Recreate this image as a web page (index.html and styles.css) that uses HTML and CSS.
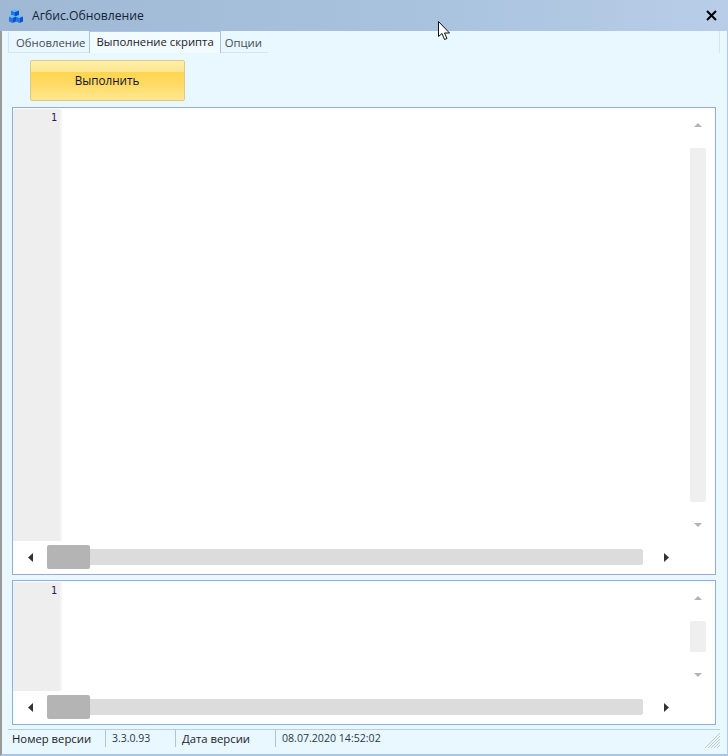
FILE: index.html
```html
<!DOCTYPE html>
<html lang="ru">
<head>
<meta charset="utf-8">
<title>Агбис.Обновление</title>
<link rel="stylesheet" href="styles.css">
</head>
<body>
<div class="window">
  <header class="titlebar">
    <svg class="app-icon" width="14" height="14" viewBox="0 0 14 14">
      <path d="M2 1.500L6 3v4.500L2 6z" fill="#1a78ea"/>
      <path d="M2 1.500L6 0l4 1.500L6 3z" fill="#6cbcfa"/>
      <path d="M6 3l4-1.500V6L6 7.500z" fill="#0b50cc"/>
      <path d="M0 7.500L3.500 9v5L0 12.500z" fill="#1a78ea"/>
      <path d="M0 7.500L3.500 6 7 7.500 3.500 9z" fill="#6cbcfa"/>
      <path d="M3.500 9L7 7.500v5L3.500 14z" fill="#0b50cc"/>
      <path d="M7 7.500L10.500 9v5L7 12.500z" fill="#1a78ea"/>
      <path d="M7 7.500L10.500 6 14 7.500 10.500 9z" fill="#6cbcfa"/>
      <path d="M10.500 9L14 7.500v5L10.500 14z" fill="#0b50cc"/>
    </svg>
    <span class="title-text">Агбис.Обновление</span>
    <svg class="close-icon" width="11" height="11" viewBox="0 0 11 11">
      <path d="M1 1l9 9M10 1l-9 9" stroke="#000" stroke-width="2" fill="none"/>
    </svg>
  </header>
  <div class="client">
    <nav class="tabs">
      <span class="tab tab-first">Обновление</span>
      <span class="tab tab-active">Выполнение скрипта</span>
      <span class="tab tab-last">Опции</span>
    </nav>
    <div class="toolbar"><button class="run-btn">Выполнить</button></div>
    <section class="editor editor-main">
      <div class="editor-body">
        <div class="gutter"><span class="line-no">1</span></div>
        <div class="code"></div>
        <div class="vscroll">
          <svg class="arrow" width="8" height="4" viewBox="0 0 8 4"><path d="M0 4l4-4 4 4z" fill="#b4b4b4"/></svg>
          <div class="vtrack"></div>
          <svg class="arrow" width="8" height="4" viewBox="0 0 8 4"><path d="M0 0l4 4 4-4z" fill="#b4b4b4"/></svg>
        </div>
      </div>
      <div class="hscroll">
        <svg class="arrow-h" width="5" height="9" viewBox="0 0 5 9"><path d="M5 0L0 4.500 5 9z" fill="#333"/></svg>
        <div class="htrack"><div class="hthumb"></div></div>
        <svg class="arrow-h" width="5" height="9" viewBox="0 0 5 9"><path d="M0 0l5 4.500L0 9z" fill="#333"/></svg>
      </div>
    </section>
    <section class="editor editor-log">
      <div class="editor-body">
        <div class="gutter"><span class="line-no">1</span></div>
        <div class="code"></div>
        <div class="vscroll">
          <svg class="arrow" width="8" height="4" viewBox="0 0 8 4"><path d="M0 4l4-4 4 4z" fill="#b4b4b4"/></svg>
          <div class="vtrack"></div>
          <svg class="arrow" width="8" height="4" viewBox="0 0 8 4"><path d="M0 0l4 4 4-4z" fill="#b4b4b4"/></svg>
        </div>
      </div>
      <div class="hscroll">
        <svg class="arrow-h" width="5" height="9" viewBox="0 0 5 9"><path d="M5 0L0 4.500 5 9z" fill="#333"/></svg>
        <div class="htrack"><div class="hthumb"></div></div>
        <svg class="arrow-h" width="5" height="9" viewBox="0 0 5 9"><path d="M0 0l5 4.500L0 9z" fill="#333"/></svg>
      </div>
    </section>
    <footer class="statusbar">
      <span class="cell cell-a">Номер версии</span>
      <span class="cell cell-b">3.3.0.93</span>
      <span class="cell cell-c">Дата версии</span>
      <span class="cell cell-d">08.07.2020 14:52:02</span>
      <svg class="grip" width="15" height="15" viewBox="0 0 15 15">
        <path d="M0 15L15 0M3 15L15 3M6 15l9-9M9 15l6-6M12 15l3-3" stroke="#bcc6ce" stroke-width="1" fill="none"/>
      </svg>
    </footer>
  </div>
</div>
<svg class="cursor" width="14" height="20" viewBox="0 0 14 20">
  <path d="M.5.500v15l3.500-3 2.500 6 2.500-1-2.500-5.500h5z" fill="#fff" stroke="#111" stroke-width="1"/>
</svg>
</body>
</html>
```
FILE: styles.css
```css
html, body {
  margin: 0;
  padding: 0;
}
body {
  width: 728px;
  height: 756px;
  overflow: hidden;
  position: relative;
  font-family: "Open Sans", "Noto Sans", sans-serif;
  color: #1a1a2a;
}
.window {
  width: 728px;
  height: 756px;
  display: flex;
  flex-direction: column;
  background: #e9f7ff;
}
.titlebar {
  height: 31px;
  flex: none;
  display: flex;
  align-items: center;
  padding: 0 11px 0 9px;
  background: linear-gradient(90deg, #9fb9d4 0%, #a9c3de 60%, #b9cde8 100%);
}
.app-icon {
  flex: none;
}
.title-text {
  margin-left: 9px;
  font-size: 12.2px;
  flex: 1;
  color: #14233a;
}
.close-icon {
  flex: none;
}
.client {
  flex: 1;
  display: flex;
  flex-direction: column;
  min-height: 0;
  border-left: 2px solid #9a9a9a;
  border-right: 1px solid #b4cbe8;
  border-bottom: 2px solid #a9c4ec;
  padding: 0 7px 0 6px;
}
.tabs {
  height: 22px;
  flex: none;
  display: flex;
  align-items: flex-end;
  border-right: 1px solid #d3e6f5;
}
.tab {
  font-size: 11.3px;
  height: 21px;
  line-height: 22px;
  box-sizing: border-box;
  padding: 0 4px 0 7px;
  color: #444c58;
  border-left: 1px solid #d3e6f5;
  border-bottom: 1px solid #d3e6f5;
}
.tab-first {
  padding-right: 4px;
}
.tab-active {
  height: 22px;
  line-height: 19px;
  padding: 0 6px;
  background: #f2fbff;
  color: #1a1a2a;
  border: 1px solid #a9c4e4;
  border-bottom: none;
}
.tab-last {
  border-left: none;
  padding: 0 6px 0 4px;
}
.toolbar {
  height: 54px;
  flex: none;
  padding: 7px 0 0 22px;
  box-sizing: border-box;
}
.run-btn {
  display: block;
  width: 155px;
  height: 41px;
  padding: 0 1px 2px 0;
  font: inherit;
  font-size: 11.7px;
  color: #12122a;
  border: 1px solid #dcc98a;
  border-radius: 2px;
  background: linear-gradient(180deg, #fdf0a8 0%, #fde58f 28%, #ffd64f 29%, #ffdb66 60%, #ffe691 100%);
}
.editor {
  display: flex;
  flex-direction: column;
  background: #fff;
  box-sizing: border-box;
  flex: none;
  margin: 0 4px;
  border: 1px solid #8cb0dc;
}
.editor-main {
  height: 468px;
  border-color: #93aed0;
}
.editor-log {
  height: 145px;
  margin-top: 5px;
}
.editor-body {
  flex: 1;
  display: flex;
  min-height: 0;
}
.gutter {
  width: 49px;
  flex: none;
  background: #eeeeee;
  box-sizing: border-box;
  margin-top: 1px;
  border-right: 2px solid #f5f5f5;
  padding: 3px 3px 0 0;
  text-align: right;
  font-family: "DejaVu Sans Mono", monospace;
  font-size: 10px;
  line-height: 12px;
  color: #2a1a5a;
}
.code {
  flex: 1;
}
.vscroll {
  width: 16px;
  flex: none;
  margin-right: 9px;
  display: flex;
  flex-direction: column;
  align-items: center;
  padding: 15px 0 14px;
  box-sizing: border-box;
}
.vtrack {
  flex: 1;
  width: 16px;
  margin: 21px 0 21px;
  background: #efefef;
  border-radius: 2px;
}
.editor-log .vscroll {
  padding-bottom: 0;
}
.editor-log .vtrack {
  flex: none;
  height: 31px;
  margin: 21px 0;
}
.arrow {
  flex: none;
}
.hscroll {
  height: 33px;
  box-sizing: border-box;
  flex: none;
  display: flex;
  align-items: center;
  padding: 0 46px 1px 15px;
}
.arrow-h {
  flex: none;
}
.htrack {
  flex: 1;
  height: 16px;
  margin: 0 21px 0 14px;
  background: #dcdcdc;
  border-radius: 2px;
  display: flex;
  align-items: center;
}
.hthumb {
  width: 43px;
  height: 24px;
  background: #b4b4b4;
  border-radius: 2px;
}
.statusbar {
  flex: 1;
  display: flex;
  align-items: flex-start;
  margin-top: 4px;
  font-size: 11.3px;
  position: relative;
  border-top: 1px solid #b4cfe8;
}
.cell {
  box-sizing: border-box;
  height: 17px;
  line-height: 17px;
  padding-left: 6px;
  border-right: 1px solid #a9c4e4;
  flex: none;
  white-space: nowrap;
}
.cell-a { width: 98px; padding-left: 4px; }
.cell-b { width: 70px; color: #26384a; font-size: 10.5px; }
.cell-c { width: 100px; }
.cell-d { border-right: none; color: #26384a; flex: 1; font-size: 10.6px; }
.grip {
  position: absolute;
  right: 0;
  bottom: 6px;
}
.cursor {
  position: absolute;
  left: 438px;
  top: 21px;
}
```
